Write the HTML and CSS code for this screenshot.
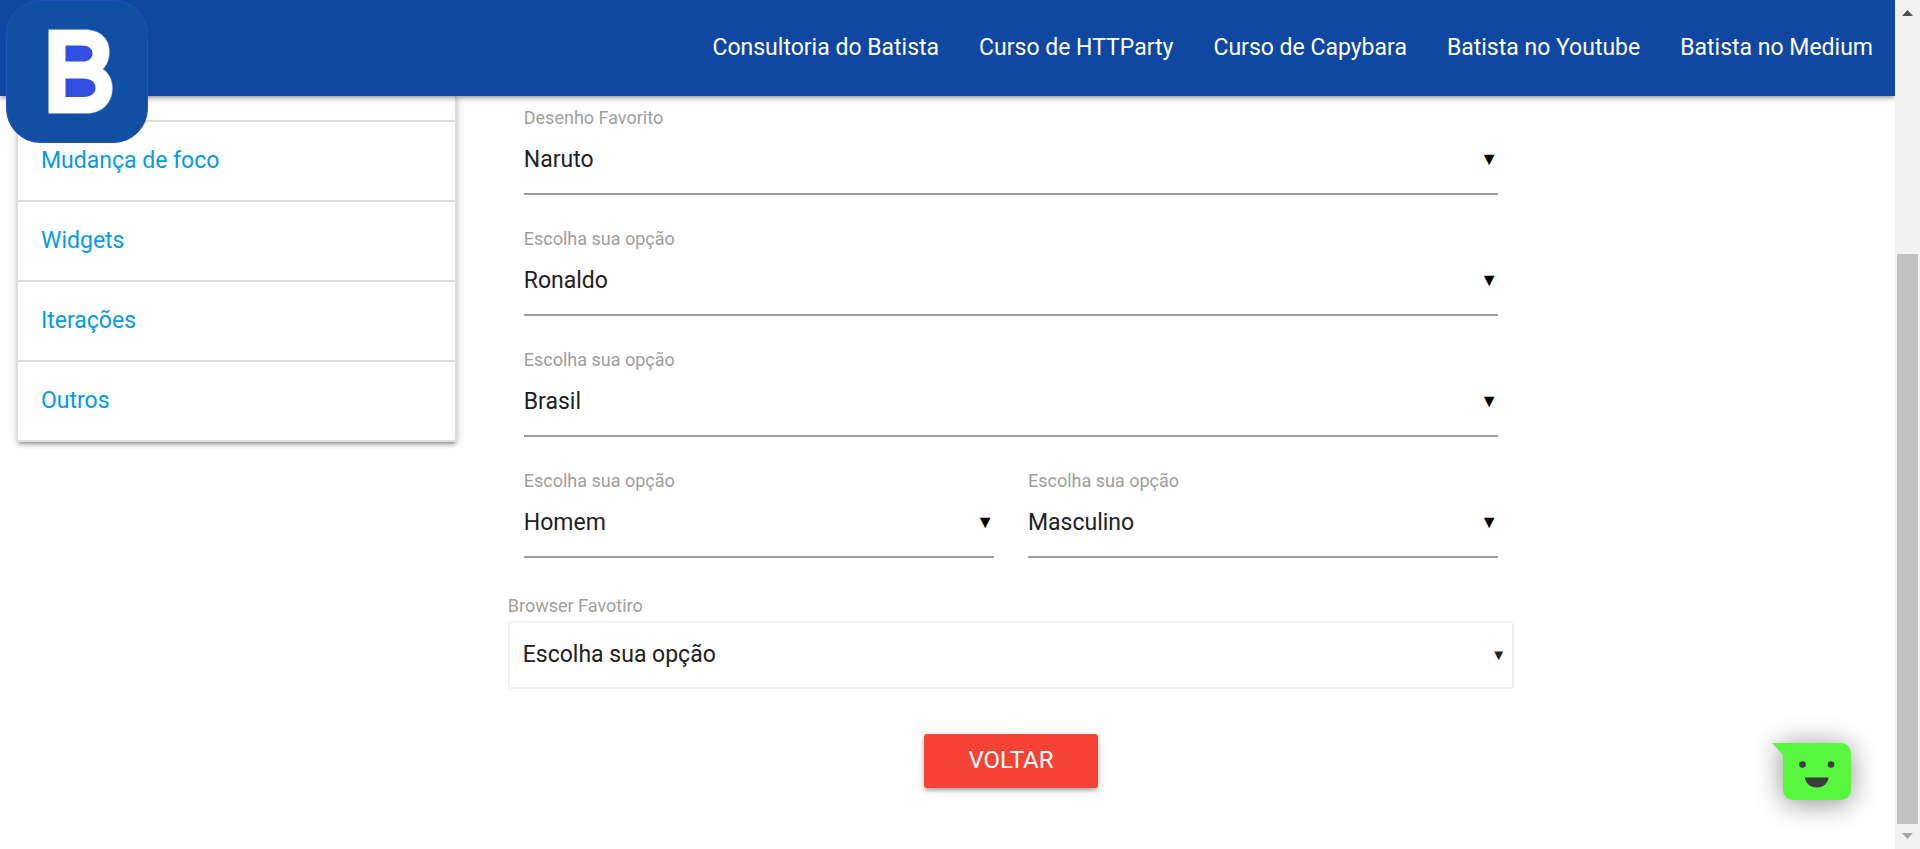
FILE: index.html
```html
<!DOCTYPE html>
<html lang="pt-BR">
<head>
<meta charset="utf-8">
<title>Batista - Selects</title>
<link rel="stylesheet" href="styles.css">
</head>
<body>
<div class="viewport">
  <div class="page">
    <header class="navbar">
      <a class="brand" href="#" aria-label="Batista">
        <svg viewBox="0 0 142 143" width="142" height="143" aria-hidden="true">
          <rect x="0.5" y="0.5" width="141" height="142" rx="34" fill="#114fa3" stroke="#2450c4"/>
          <path d="M42.500 29.500H78C95 29.500 103.500 39 103.500 52C103.500 59 101 65 97 69C103 73 106.500 80 106.500 88C106.500 103 96 113.500 80 113.500H42.500Z" fill="#fff" stroke="#7f8ff0" stroke-width="0.500"/>
          <path d="M59.500 45.500H75C83 45.500 86.500 49 86.500 53.500C86.500 59 82 61.500 76 61.500H59.500Z" fill="#334fe3"/>
          <path d="M59.500 78.500H77C85 78.500 89.500 82 89.500 88C89.500 94 84 97 77 97H59.500Z" fill="#334fe3"/>
        </svg>
      </a>
      <nav class="menu">
        <a href="#">Consultoria do Batista</a>
        <a href="#">Curso de HTTParty</a>
        <a href="#">Curso de Capybara</a>
        <a href="#">Batista no Youtube</a>
        <a href="#">Batista no Medium</a>
      </nav>
    </header>
    <div class="layout">
      <aside class="sidebar">
        <ul class="collection">
          <li class="collection-start"></li>
          <li><a href="#">Mudança de foco</a></li>
          <li><a href="#">Widgets</a></li>
          <li><a href="#">Iterações</a></li>
          <li><a href="#">Outros</a></li>
        </ul>
      </aside>
      <main class="content">
        <form class="form">
          <div class="fields">
            <div class="field">
              <label for="cartoon">Desenho Favorito</label>
              <div class="control"><select id="cartoon"><option>Naruto</option></select><span class="caret">▼</span></div>
            </div>
            <div class="field">
              <label for="player">Escolha sua opção</label>
              <div class="control"><select id="player"><option>Ronaldo</option></select><span class="caret">▼</span></div>
            </div>
            <div class="field">
              <label for="country">Escolha sua opção</label>
              <div class="control"><select id="country"><option>Brasil</option></select><span class="caret">▼</span></div>
            </div>
            <div class="pair">
              <div class="field">
                <label for="person">Escolha sua opção</label>
                <div class="control"><select id="person"><option>Homem</option></select><span class="caret">▼</span></div>
              </div>
              <div class="field">
                <label for="gender">Escolha sua opção</label>
                <div class="control"><select id="gender"><option>Masculino</option></select><span class="caret">▼</span></div>
              </div>
            </div>
          </div>
          <div class="field boxed">
            <label for="browser">Browser Favotiro</label>
            <div class="control"><select id="browser"><option>Escolha sua opção</option></select><span class="caret">▼</span></div>
          </div>
          <button class="back" type="button">VOLTAR</button>
        </form>
      </main>
    </div>
    <button class="chat" type="button" aria-label="Chat">
      <svg viewBox="0 0 79 57" width="79" height="57" aria-hidden="true">
        <path d="M0 0H69A10 10 0 0 1 79 10V47A10 10 0 0 1 69 57H21A10 10 0 0 1 11 47V12Z" fill="#59f640"/>
        <circle cx="30.500" cy="21.500" r="3.300" fill="#3c3c3c"/>
        <circle cx="59" cy="21.500" r="3.300" fill="#3c3c3c"/>
        <path d="M33 34.500H56.500C56 40.500 51 44.500 44.800 44.500C38.500 44.500 33.500 40.500 33 34.500Z" fill="#3c3c3c"/>
      </svg>
    </button>
  </div>
  <div class="scrollbar" aria-hidden="true">
    <svg viewBox="0 0 25 25" width="25" height="25"><path d="M7 16L12.500 10L18 16Z" fill="#505050"/></svg>
    <div class="track"><div class="thumb"></div></div>
    <svg viewBox="0 0 25 25" width="25" height="25"><path d="M7 9L12.500 15L18 9Z" fill="#a3a3a3"/></svg>
  </div>
</div>
</body>
</html>
```
FILE: styles.css
```css
* { box-sizing: border-box; }
body {
  margin: 0;
  background: #fff;
  color: #212121;
  font-family: Roboto, "Liberation Sans", sans-serif;
  font-size: 23px;
  line-height: 34px;
}
a { text-decoration: none; }
.viewport { display: flex; height: 100vh; }
.page { position: relative; flex: 1; overflow: hidden; }

.navbar {
  position: relative;
  z-index: 2;
  display: flex;
  align-items: flex-start;
  justify-content: space-between;
  height: 96px;
  padding: 0 22px 0 6px;
  background: #0f47a1;
  box-shadow: 0 3px 3px rgba(0, 0, 0, .14), 0 4px 2px -3px rgba(0, 0, 0, .12), 0 2px 8px rgba(0, 0, 0, .2);
}
.brand svg { display: block; }
.menu { display: flex; gap: 40px; }
.menu a { color: #fff; line-height: 96px; }

.layout { display: grid; grid-template-columns: 3fr 9fr; }
.sidebar { padding: 0 17px; }
.collection {
  margin: 0;
  padding: 0;
  list-style: none;
  border: 2px solid #ddd;
  border-top: 0;
  border-left-width: 1px;
  border-radius: 3px;
  box-shadow: 0 3px 3px rgba(0, 0, 0, .14), 0 4px 2px -3px rgba(0, 0, 0, .2), 0 2px 8px rgba(0, 0, 0, .2);
}
.collection li { border-bottom: 2px solid #ddd; }
.collection li:last-child { border-bottom: 0; }
.collection-start { height: 26px; }
.collection a { display: block; padding: 22px 23px; color: #039be5; }

.content { padding: 11px 17px 0; }
.form { display: flex; flex-direction: column; width: 75%; padding: 0 17px; }
.fields { display: grid; gap: 33px; padding: 0 16px; }
.pair { display: grid; grid-template-columns: 1fr 1fr; gap: 34px; }
.field label { display: block; color: #9e9e9e; font-size: 18px; line-height: 22px; }
.control { display: grid; align-items: center; }
.control select, .caret { grid-area: 1 / 1; }
.control select {
  appearance: none;
  width: 100%;
  height: 66px;
  padding: 0 0 3px;
  border: 0;
  border-bottom: 2px solid #9e9e9e;
  border-radius: 0;
  background: transparent;
  color: #212121;
  font: inherit;
}
.caret { justify-self: end; padding: 0 0 6px; color: #000; font-size: 18px; line-height: 20px; pointer-events: none; }
.boxed { margin-top: 37px; }
.boxed .control { margin-top: 4px; }
.boxed select { height: 68px; padding: 0 13px; border: 2px solid #f2f2f2; border-radius: 3px; }
.boxed .caret { padding: 0 8px 0 0; color: #212121; font-size: 15px; }
.back {
  align-self: center;
  height: 54px;
  margin-top: 45px;
  padding: 0 44px 2px;
  border: 0;
  border-radius: 3px;
  background: #f44336;
  color: #fff;
  font: inherit;
  font-size: 24px;
  box-shadow: 0 3px 3px rgba(0, 0, 0, .14), 0 4px 2px -3px rgba(0, 0, 0, .12), 0 2px 8px rgba(0, 0, 0, .2);
}
.chat {
  position: absolute;
  right: 44px;
  bottom: 49px;
  padding: 0;
  border: 0;
  background: none;
}
.chat svg { display: block; overflow: visible; filter: drop-shadow(0 3px 14px rgba(0, 0, 0, .45)); }

.scrollbar { display: flex; flex-direction: column; width: 25px; background: #f1f1f1; }
.track { flex: 1; display: flex; flex-direction: column; justify-content: flex-end; padding: 0 2px; }
.thumb { flex: 0 0 71.4%; background: #c1c1c1; }
```
